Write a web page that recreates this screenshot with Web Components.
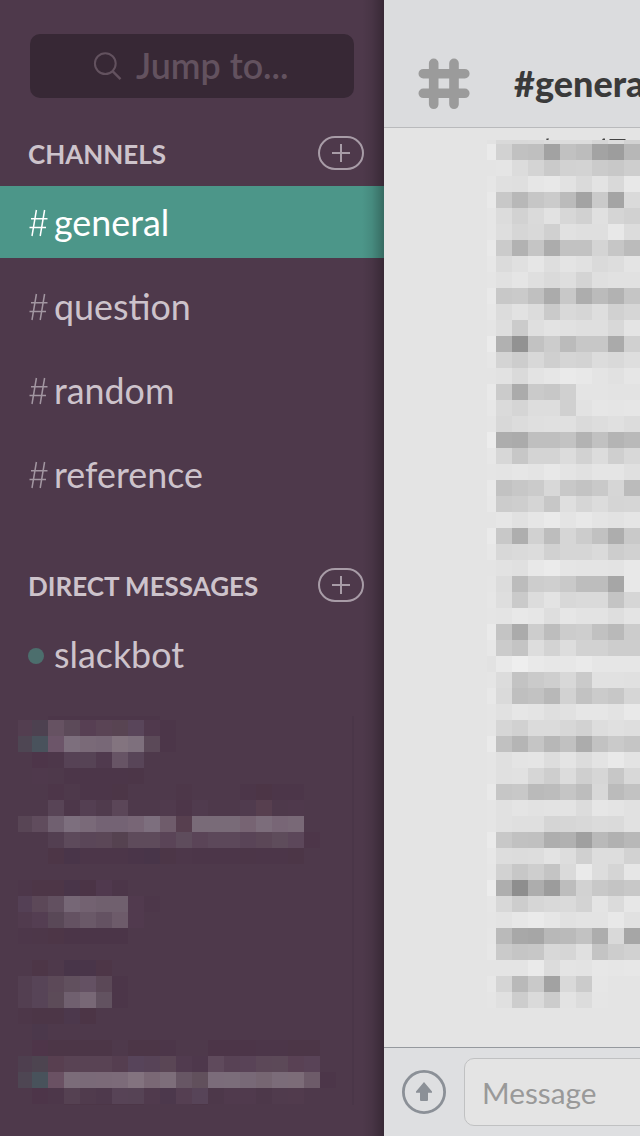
<!DOCTYPE html>
<html lang="en"><head><meta charset="utf-8"><title>Channels</title>
<style>
body{margin:0;width:640px;height:1136px;overflow:hidden;font-family:Lato,"Liberation Sans",sans-serif}
</style></head><body>
<team-app></team-app>
<script>
const define = (name, html, setup) => customElements.define(name, class extends HTMLElement {
  constructor() { super(); this.attachShadow({mode:'open'}).innerHTML = html; }
  connectedCallback() { if (setup) setup(this, this.shadowRoot); }
});

// Redacted block: a grid of flat tiles, with a narrow leading column.
const messageTiles = `
e2 d9 d8 d9 dc dc dc d5 dc d2 d7
ea d2 c1 bf a2 c1 bc a3 9d b7
e4 e5 dc d4 ca d2 d3 cb c8 ce
e6 e0 df e6 e8 e2 da e3 d9 e8
e9 c8 b8 c6 cb bb a3 ca a4 da
e6 dc d2 da e2 d7 d1 e0 d5 d1
e6 de d6 d9 d0 e1 df df e8 dc
e9 cb b2 c5 ac c2 c2 d4 c6 bb
e7 db e0 e6 de e4 e1 da dd e4
e5 e1 e5 df da de d4 df e1 e1
e9 c8 ca c0 ab c8 ad bb b2 c5
e7 dc e2 dc ca d9 d6 de d1 d6
e5 de cb df e3 e1 df df d8 e4
eb b1 92 c2 cc bb c7 c7 aa d0
e6 d4 cd d8 cf d5 d3 dc d9 de
e4 e2 da e3 e6 ea e8 e4 e1 e6
e9 cb ab ca c7 d0 e4 e4 e3 e3
e7 da d5 dd dd d0 e2 e6 e5 e6
e5 d8 dc df e0 e0 da dd e0 dc
ec ad ab bf bf c3 b3 c1 b4 b9
e7 d7 c7 d4 d4 dc d2 dc cf d8
e5 e4 e6 e4 e8 e4 e1 e5 e5 e0
e9 c2 c7 cb d8 c8 c3 c9 d6 bb
e8 cc ce d5 c7 df d6 dc d5 d6
e4 e6 e1 e6 ea e4 e8 e4 e2 e5
ea c8 ae d1 bd d6 cc c1 ad c9
e7 d8 da dc d1 d6 d6 da cd d1
e4 e2 e0 e8 eb e5 e4 e4 e3 e8
e5 dc bc cd cf c9 bd bd a6 e8
e6 de ca dc e3 d8 da da c4 d6
e5 e4 e8 e6 de e6 e3 e3 de e4
ea c4 ab cd bd cc ce c1 b9 cc
e7 cb c4 dd d3 dd d2 d2 cd cd
e2 e9 ee e9 e7 e7 ea e6 e6 e6
e5 dc c3 ca ce d8 ca e1 e1 e0
e8 da bf c2 b8 d2 c2 cb c7 d6
e5 e1 e6 e4 df e1 e6 e6 e3 e9
e5 d6 d1 db db d7 d2 dd e0 de
ea c1 b5 c5 b7 c1 ac c2 ca c5
e5 e0 e4 e5 dd e4 dc e3 e9 e3
e5 e0 e1 d6 ce dc cf d6 c7 d8
e9 c6 c8 ba bc c5 bd d8 bb c2
e5 e1 e4 e2 e3 e3 dc e6 e4 e1
e5 e1 df df d5 d6 d8 db da e1
ea c8 c1 c0 ae b1 a0 b9 b1 b8
e7 dd dc dd e3 dd d0 dd dd d2
e6 d2 c7 ce c4 da ea dd d5 e6
ec ae 8e ad 9c bd d2 c8 c4 c8
e6 d8 cd d6 d9 da d3 e4 db e7
e5 e3 e7 ea e6 e1 e3 e3 e8 e1
e6 ba a8 a6 b8 ba c2 ad d9 a6
e7 ca c5 c7 d8 d6 e0 c4 cd d1
e4 e4 e4 ea dc e4 e3 e7 e6 e7
e7 d5 b9 c9 a2 d9 cb e6 e4 e4
e5 e0 cd da cc e3 dc e5 e4 e4`;
const memberTiles = `
. . 4b3648 4b3648 4b3648 4b3648 4b3648 4b3648 4b3648
533e50 4d4150 665262 5c4a59 573f53 5a4455 584452 59455a 513a4e 4b3648
4e4653 49525c 6c5569 7d6f7d 7a6a78 786877 83747f 7e707d 5b4958 4b3648
. 4c3447 4d3749 564255 564355 513c50 675465 584558
. 503a4d . 4b3648 4b3648 4b3648 4b3648 4b3646
. . 4c3648 . 4b3647 4b3647 4b3545 . . . 4c3748 . . . 4b3647 4b3442 4b3647 4b3647
. . 584456 4d3749 543f52 523d4f 5b4658 . . 513c4e 4c3648 523d50 . . 523d50 573f4f . 503a4d
584555 604c5d 706070 7d6f7e 7a6a79 746374 746374 786676 7d6f7e 6f5c6b 573f4f 796b78 796b78 796b78 776473 7c6d7b 786676 796977
. . 533f51 5d4a5b 5a4658 5b4757 554250 5e4b5b 5e4b5b 5a4457 5e4c5c 5a4457 5c485a 5c485a 594457 5b4757 5e4c5b 5c475a 4c3647
. . 4d3645 463447 4b3547 4b3547 4b3547 483347 453347 4b3545 4d3749 4b3647 4b3647 4b3647 4b3546 4b3647 4b3647 4b3545
.
4d3749 4d3545 4d3545 463447 4a3242 523b50 4b3648
544055 5c4858 625060 766776 736271 70606e 70606e 533c50 4c3749
533d50 543e52 594857 645262 6a5968 645262 6d5b6a 533c50
4c3749 4d3748 4d3645 4a3446 4a3446 4a3446 4a3446
.
. 4c3644 . 453347 463347 4c3544
533f51 574457 5c4958 61505e 645163 5b4857 4b3547
533f51 574457 5c4b58 70606f 786876 625260 4b3547
4d3748 4b3545 4b3545 4b394d 4b3342
. 4a394b
. 4e3448 4b3545 4b3545 4b3545 4b3545 . 4b3545 4b3545 4b3547 . . 4b3446 4b3446 4b3446 4b3547 4b3547 4b3545 4b3545
4e3f4f 4d4450 583f50 594354 594354 594354 553e50 57445a 574357 5a4655 543d51 4e394c 5f4a5c 584255 594357 5c4858 5c4958 594154 594357
4e4653 48525b 6a5163 7b6c79 7a6a78 7b6a78 7c6b79 83737f 7a6875 7d6e7a 675664 61505c 7b6c7a 7b6d7a 786977 766672 7b6c79 7c6c78 6d5b69 4b3547
. 4c3448 4d3749 554152 513d4e 4f3b4d 574356 564355 523c4f 4b394c 553f52 574458 4d384a 513c4e 513c4e 4d384a 523d4f 533d4f
. . . 4b3545 4b3545 4b3545 4b3545 4b3545 . . . 4b3545`;
const SETS = {messages:[messageTiles,'9px',10], members:[memberTiles,'14px',20]};
define('tile-mosaic', `<style>:host{display:grid;grid-auto-rows:16px;flex:none}.faint{opacity:.6}</style>`, (el, root) => {
  const [text, lead, n] = SETS[el.getAttribute('set')];
  el.style.gridTemplateColumns = `${lead} repeat(${n-1},16px)`;
  const rows = text.trim().split('\n');
  el.style.gridTemplateRows = `4px repeat(${rows.length-1},16px)`;
  for (const row of rows) {
    const cells = row.trim().split(' ');
    for (let i = 0; i < n; i++) {
      const c = cells[i], d = document.createElement('div');
      if (c && c !== '.') {
        d.style.background = '#' + (c.length === 2 ? c + c + c : c);
        if (c.length === 6 && parseInt(c.slice(2, 4), 16) < 0x3e) d.className = 'faint';
      }
      root.append(d);
    }
  }
});

define('jump-field', `<style>
:host{display:flex;align-items:center;box-sizing:border-box;width:324px;height:64px;margin:34px 0 0 30px;padding-left:63px;border-radius:10px;background:#372835;color:#63525f}
svg{flex:none;margin-right:13px}
span{font-size:35.8px;font-weight:600;line-height:61px;padding-bottom:1px;white-space:nowrap}
</style><svg width="30" height="30" viewBox="0 0 30 30" fill="none" stroke="currentColor" stroke-width="2"><circle cx="12.3" cy="12.6" r="10.4"/><path d="M19.5 20.2l8 8" stroke-width="2.4"/></svg><span><slot></slot></span>`);

define('section-title', `<style>
:host{display:flex;align-items:center;justify-content:space-between;height:34px;padding:0 20px 0 28px;color:#cdc3cb}
span{font-size:26px;font-weight:700;line-height:34px;padding-top:2px;white-space:nowrap}
svg{flex:none}
</style><span><slot></slot></span><svg width="46" height="34" fill="none" stroke="#a89ca7" stroke-width="2"><rect x="1" y="1" width="44" height="32" rx="16"/><path d="M14 17h18M23 8v18"/></svg>`);

define('nav-row', `<style>
:host{display:flex;align-items:center;height:72px;padding-left:28px;font-size:35.85px;color:#cdc3cb}
:host([active]){background:#4c9689;color:#fff}
.mark{width:26px;flex:none;color:#a296a1;display:flex;align-items:center}
:host([active]) .mark{color:#fff}
.mark svg{padding-top:2px}
.dot{width:16px;height:16px;border-radius:50%;background:#4c6e6d}
.name{padding-top:2px;line-height:44px;white-space:nowrap}
:host([person]) .name{padding:0 0 2px}
</style><div class="mark"></div><div class="name"><slot></slot></div>`, (el, root) => {
  root.querySelector('.mark').innerHTML = el.hasAttribute('person') ? '<div class="dot"></div>' :
    '<svg width="20" height="28" fill="none" stroke="currentColor" stroke-width="1.5"><path d="M8.4 1L4 27M16.6 1L12.2 27M3 9.7h16.5M1.5 18.5H18"/></svg>';
});

define('side-panel', `<style>
:host{display:flex;flex-direction:column;width:384px;height:1136px;flex:none;background:#4e394b;position:relative;overflow:hidden}
:host::after{content:"";position:absolute;top:0;right:0;width:22px;height:100%;background:linear-gradient(90deg,rgba(0,0,0,0),rgba(0,0,0,.08) 45%,rgba(0,0,0,.29))}
.list{display:flex;flex-direction:column;gap:12px}
.people{display:flex;width:336px;height:389px;margin:24px 0 0 18px;overflow:hidden;box-sizing:border-box;border-right:2px solid #4a3648}
</style>
<jump-field>Jump to...</jump-field>
<section-title style="margin-top:38px">CHANNELS</section-title>
<div class="list" style="margin-top:16px"><nav-row active>general</nav-row><nav-row>question</nav-row><nav-row>random</nav-row><nav-row>reference</nav-row></div>
<section-title style="margin-top:58px">DIRECT MESSAGES</section-title>
<nav-row person style="margin-top:18px">slackbot</nav-row>
<div class="people"><tile-mosaic set="members"></tile-mosaic></div>`);

define('chat-header', `<style>
:host{display:flex;box-sizing:border-box;height:128px;flex:none;background:#dbdcde;border-bottom:1px solid #b9babc;padding:58px 0 0 34px;color:#3a3a3a}
svg{flex:none}
span{font-size:36px;font-weight:900;line-height:44px;margin:3px 0 0 44px;white-space:nowrap}
</style><svg width="52" height="52" fill="none" stroke="#9b9b9b" stroke-width="9.6" stroke-linecap="round"><path d="M15.7 5.3v41M36 5.3v41M5.3 15.7h41.5M5.3 35.3h41.5"/></svg><span><slot></slot></span>`);

define('message-bar', `<style>
:host{display:flex;align-items:center;box-sizing:border-box;height:89px;flex:none;background:#dedfe1;border-top:1px solid #95999e;padding-left:18px}
svg{flex:none}
.field{box-sizing:border-box;width:260px;height:68px;flex:none;margin-left:18px;border:1px solid #c0c1c2;border-radius:10px;background:#e4e4e4;padding:1px 0 0 17px;font-size:29.8px;line-height:66px;color:#999}
</style><svg width="44" height="44"><circle cx="22" cy="22" r="20.6" fill="none" stroke="#8b9097" stroke-width="2.8"/><path d="M22 12l8 9.5v1.3h-4V30q0 1-1 1h-6q-1 0-1-1v-7.2h-4v-1.3z" fill="#8b9097"/></svg><div class="field"><slot></slot></div>`);

define('chat-panel', `<style>
:host{display:flex;flex-direction:column;width:256px;height:1136px;flex:none;overflow:hidden;background:#e4e4e4}
.feed{height:919px;flex:none}
.peek{display:block;height:12px;margin-left:103px}
tile-mosaic{margin-left:103px}
</style><chat-header>#general</chat-header>
<div class="feed"><svg class="peek" width="153" height="12"><path d="M59.5 10.5h2.5l-.7 1.5h-2zM116 10.5h2v1.5h-3zM122.5 11h16v1h-16z" fill="#444"/></svg><tile-mosaic set="messages"></tile-mosaic></div>
<message-bar>Message</message-bar>`);

define('team-app', `<style>:host{display:flex;width:640px;height:1136px;overflow:hidden}</style><side-panel></side-panel><chat-panel></chat-panel>`);
</script></body></html>
